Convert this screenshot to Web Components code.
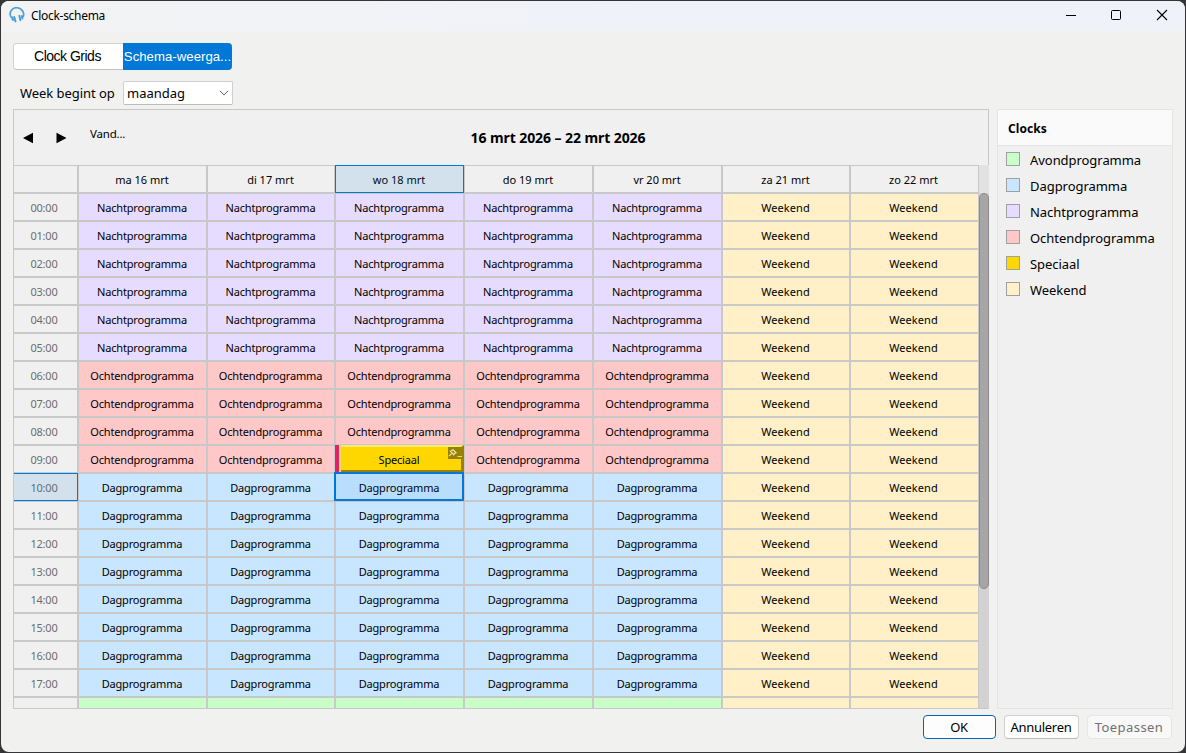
<!DOCTYPE html>
<html lang="nl">
<head>
<meta charset="utf-8">
<title>Clock-schema</title>
<style>
  html, body {
    margin: 0;
    height: 100%;
    overflow: hidden;
    background: #353537;
  }
</style>
</head>
<body>
<clock-window></clock-window>

<script>
(function () {
  const COLORS = {
    Avondprogramma: "#c8ffc8",
    Dagprogramma: "#c8e6ff",
    Nachtprogramma: "#e6dcff",
    Ochtendprogramma: "#ffc8c8",
    Speciaal: "#ffd700",
    Weekend: "#fff0c8",
  };
  const DAYS = ["ma 16 mrt", "di 17 mrt", "wo 18 mrt", "do 19 mrt", "vr 20 mrt", "za 21 mrt", "zo 22 mrt"];
  const TODAY = 2;
  const CURRENT_HOUR = 10;

  class UiElement extends HTMLElement {
    render(html) {
      if (!this.shadowRoot) this.attachShadow({ mode: "open" });
      this.shadowRoot.innerHTML = "<style>:host, :host * { box-sizing: border-box; }</style>" + html;
    }
  }

  class TitleBar extends UiElement {
    connectedCallback() {
      this.render(`
        <style>
          :host { display: flex; align-items: center; height: 30px; flex: none; padding-left: 8px;
            background: linear-gradient(90deg, #f3f3f4, #eff2f9 55%, #eff3f9); }
          .title { flex: 1; margin-left: 5px; font-size: 12px; letter-spacing: -.3px; line-height: 16px; color: #000; }
          .btn { width: 46px; height: 30px; flex: none; position: relative; left: 1px; }
          svg { display: block; }
        </style>
        <svg width="17" height="18" viewBox="0 0 17 18" fill="none" stroke="#4d9fd8">
          <path d="M2.6 10.8C.4 8.2.8 4.3 3.3 2.3C5.9.2 10 .2 12.3 2.5C14.7 4.700 15.200 7.700 13.900 10" stroke-width="1.7"/>
          <path d="M3 10.400l.9 2.600M5.200 10l1.300 4.600" stroke-width="2" stroke-linecap="round"/>
          <path d="M10.400 8.700l1 4.600M12.900 9l.5 2.600" stroke-width="2" stroke-linecap="round"/>
        </svg>
        <span class="title"><slot></slot></span>
        <svg class="btn" viewBox="0 0 46 30"><path d="M18 14.5h10" stroke="#000"/></svg>
        <svg class="btn" viewBox="0 0 46 30"><rect x="17.5" y="9.5" width="9" height="9" rx="1" fill="none" stroke="#000"/></svg>
        <svg class="btn" viewBox="0 0 46 30"><path d="M17 9l10 10M27 9l-10 10" stroke="#000" stroke-width="1.1"/></svg>`);
    }
  }

  class TabSwitch extends UiElement {
    connectedCallback() {
      this.render(`
        <style>
          :host { display: flex; width: 219px; height: 27px; border: 1px solid #d2d2d2; border-bottom-color: #c2c2c2;
            border-radius: 4px; background: #fff; font: 14px/25px "Liberation Sans", Arial, sans-serif; color: #000; }
          span { flex: 1; min-width: 0; padding-right: 3px; text-align: center; white-space: nowrap; letter-spacing: -.5px; }
          .on { background: #0078d7; color: #fff; margin: -1px; padding: 0; border-radius: 0 4px 4px 0; line-height: 27px; flex: 0 0 109px; letter-spacing: .02px; font-size: 13.2px; }
        </style>
        <span><slot name="left"></slot></span><span class="on"><slot name="right"></slot></span>`);
    }
  }

  class DropDown extends UiElement {
    connectedCallback() {
      this.render(`
        <style>
          :host { display: flex; align-items: center; justify-content: space-between; width: 110px; height: 24px;
            padding: 0 3px 0 3px; background: #fff; border: 1px solid #cfcfcf; border-bottom-color: #bcbcbc; border-radius: 2px;
            font-size: 13px; line-height: 20px; color: #000; }
        </style>
        <slot></slot>
        <svg width="10" height="6" viewBox="0 0 10 6"><path d="M1 .9l4 4 4-4" fill="none" stroke="#555"/></svg>`);
    }
  }

  class PushButton extends UiElement {
    connectedCallback() {
      this.render(`
        <style>
          :host { display: flex; align-items: center; justify-content: center; height: 24px; background: #fdfdfd; padding-right: 1px;
            border: 1px solid #d0d0d0; border-bottom-color: #bbb; border-radius: 4px; font-size: 13px; line-height: 20px; letter-spacing: -.3px; color: #000; }
          :host([primary]) { border-color: #0067b8; }
          :host([disabled]) { color: #717171; background: #f8f8f8; border-color: #e6e6e6; letter-spacing: .45px; }
        </style>
        <slot></slot>`);
    }
  }

  class ScheduleCell extends UiElement {
    connectedCallback() {
      const name = this.getAttribute("name") || "";
      const special = name === "Speciaal";
      this.render(`
        <style>
          :host { display: block; position: relative; border: solid #c8c8c8; border-width: 0 2px 2px 0; background: ${COLORS[name] || "#f0f0f0"};
            padding-right: 1px; text-align: center; font-size: 11px; line-height: 28px; letter-spacing: -.17px; color: #000; white-space: nowrap; }
          :host([last]) { border-right-width: 1px; padding-right: 2px; }
          :host([name="Weekend"]) { letter-spacing: .08px; }
          :host([head]) { line-height: 27px; letter-spacing: 0; }
          :host([time]) { color: #6d6d6d; letter-spacing: -.2px; padding-right: 3px; }
          .frame { position: absolute; pointer-events: none; }
          .day { inset: -1px -1px -1px -1px; border: 1px solid #0078d7; background: rgba(0, 120, 215, .12); }
          .hour { inset: -1px -1px -1px 0; border: 1px solid #0078d7; border-left: 0; background: rgba(0, 120, 215, .12); }
          .focus { inset: -2px -1px -1px -2px; border: 2px solid #0078d7; background: rgba(0, 120, 215, .07); z-index: 2; }
          .bevel { inset: -1px -1px 0 -1px; border: solid; border-width: 2px 3px 2px 0; border-color: #ffe874 #9a8200 #9a8200 #ffe874; }
          .mark { inset: -1px auto 0 -1px; width: 6px; background: #e91e63; border-right: 2px solid #ffe36b; }
          .pin { right: 1px; top: 1px; width: 14px; height: 12px; }
        </style>
        <slot></slot>
        ${this.hasAttribute("today") ? '<div class="frame day"></div>' : ""}
        ${this.hasAttribute("now") ? '<div class="frame hour"></div>' : ""}
        ${this.hasAttribute("focused") ? '<div class="frame focus"></div>' : ""}
        ${special ? `<div class="frame bevel"></div><div class="frame mark"></div>
          <svg class="frame pin" viewBox="0 0 14 12"><rect width="14" height="12" fill="#998100"/>
            <path d="M4.500 2.200l4 4M5.300 3L2.500 4.300l3.200 3.400 1.800-2.500M4 6.200L1 9.200" fill="none" stroke="#f0e6b0" stroke-width="1.2"/>
            <path d="M9.500 9.500h4.500" stroke="#e4d9a0"/></svg>` : ""}`);
    }
  }

  class ScheduleGrid extends UiElement {
    programme(day, hour) {
      if (day > 4) return "Weekend";
      if (day === 2 && hour === 9) return "Speciaal";
      if (hour < 6) return "Nachtprogramma";
      if (hour < 10) return "Ochtendprogramma";
      return hour < 18 ? "Dagprogramma" : "Avondprogramma";
    }

    connectedCallback() {
      let cells = "<schedule-cell head></schedule-cell>";
      DAYS.forEach((d, i) => {
        cells += `<schedule-cell head ${i === TODAY ? "today" : ""} ${i === 6 ? "last" : ""}>${d}</schedule-cell>`;
      });
      for (let h = 0; h <= 18; h++) {
        // the 18:00 row is only partly scrolled into view
        const shown = h < 18;
        cells += `<schedule-cell time ${h === CURRENT_HOUR ? "now" : ""}>${shown ? String(h).padStart(2, "0") + ":00" : ""}</schedule-cell>`;
        for (let d = 0; d < 7; d++) {
          const p = this.programme(d, h);
          cells += `<schedule-cell name="${p}" ${d === 6 ? "last" : ""} ${d === TODAY && h === CURRENT_HOUR ? "focused" : ""}>${shown ? p : ""}</schedule-cell>`;
        }
      }
      this.render(`
        <style>
          :host { display: flex; flex-direction: column; width: 976px; height: 600px; background: #f0f0f0; border: 1px solid #c8c8c8; border-right: 0; }
          header { display: flex; height: 55px; flex: none; border-right: 1px solid #c8c8c8; color: #000; }
          .nav { display: flex; width: 76px; padding: 22px 0 0 9px; gap: 22px; }
          .nav svg { display: block; }
          .today { width: 60px; padding-top: 16px; font-size: 11.5px; line-height: 16px; letter-spacing: -.2px; }
          .range { flex: 1; padding: 19px 0 0 0; margin-right: 22px; text-align: center; font-size: 14px; font-weight: bold; line-height: 18px; letter-spacing: -.08px; }
          .body { flex: 1; min-height: 0; display: flex; border-top: 1px solid #c8c8c8; }
          .cells { display: grid; grid-template-columns: 65px 129px 128px 129px 129px 129px 128px 128px; grid-template-rows: 28px; grid-auto-rows: 28px; overflow: hidden; width: 965px; }
          /* the first row keeps its top frame edge on the divider above it */
          .cells { margin-top: -1px; padding-top: 1px; }
          .bar { width: 10px; margin-top: -1px; background: #d2d2d2; display: flex; flex-direction: column; }
          .bar i { height: 28px; background: #e2e2e2; }
          .bar b { height: 396px; background: #a6a6a6; border: 1px solid #8a8a8a; border-radius: 5px; }
        </style>
        <header>
          <div class="nav">
            <svg width="11" height="12" viewBox="0 0 11 12"><path d="M0 6L10 .8v10.4z"/></svg>
            <svg width="11" height="12" viewBox="0 0 11 12"><path d="M10.5 6L.5.8v10.4z"/></svg>
          </div>
          <div class="today">Vand...</div>
          <div class="range">16 mrt 2026 – 22 mrt 2026</div>
        </header>
        <div class="body"><div class="cells">${cells}</div><div class="bar"><i></i><b></b></div></div>`);
    }
  }

  class ClockLegend extends UiElement {
    connectedCallback() {
      const rows = Object.keys(COLORS).map((n) => `<li><i style="background:${COLORS[n]}"></i><span>${n}</span></li>`).join("");
      this.render(`
        <style>
          :host { display: block; width: 176px; height: 600px; border: 1px solid #e4e4e4; background: #f0f0f0; }
          h2 { margin: 0; height: 36px; padding: 1px 0 0 10px; background: #fafafa; border-bottom: 1px solid #e4e4e4;
            font-size: 12px; line-height: 36px; letter-spacing: .05px; color: #000; }
          ul { list-style: none; margin: 0; padding: 1px 0 0 8px; }
          li { display: flex; align-items: center; height: 26px; gap: 10px; font-size: 13px; letter-spacing: -.05px; color: #000; }
          li i { width: 14px; height: 14px; border: 1px solid #a0a0a0; margin-top: -2px; }
        </style>
        <h2>Clocks</h2>
        <ul>${rows}</ul>`);
    }
  }

  class ClockWindow extends UiElement {
    connectedCallback() {
      this.render(`
        <style>
          :host { display: flex; flex-direction: column; width: 1184px; height: 751px; margin: 1px; overflow: hidden;
            border-radius: 8px; background: #f1f1f0; font-family: "Noto Sans", "Open Sans", sans-serif; }
          tab-switch { margin: 12px 0 0 12px; }
          .week { display: flex; align-items: center; height: 24px; margin: 11px 0 4px 19px; font-size: 13px; line-height: 20px; color: #000; }
          .week span { width: 103px; letter-spacing: -.05px; }
          .main { display: flex; gap: 8px; margin-left: 12px; }
          footer { display: flex; justify-content: flex-end; gap: 8px; margin: 6px 13px 0 0; }
        </style>
        <title-bar>Clock-schema</title-bar>
        <tab-switch><span slot="left">Clock Grids</span><span slot="right">Schema-weerga...</span></tab-switch>
        <div class="week"><span>Week begint op</span><drop-down>maandag</drop-down></div>
        <div class="main"><schedule-grid></schedule-grid><clock-legend></clock-legend></div>
        <footer>
          <push-button primary style="width:73px">OK</push-button>
          <push-button style="width:75px">Annuleren</push-button>
          <push-button disabled style="width:85px">Toepassen</push-button>
        </footer>`);
    }
  }

  customElements.define("title-bar", TitleBar);
  customElements.define("tab-switch", TabSwitch);
  customElements.define("drop-down", DropDown);
  customElements.define("push-button", PushButton);
  customElements.define("schedule-cell", ScheduleCell);
  customElements.define("schedule-grid", ScheduleGrid);
  customElements.define("clock-legend", ClockLegend);
  customElements.define("clock-window", ClockWindow);
})();
</script>
</body>
</html>
